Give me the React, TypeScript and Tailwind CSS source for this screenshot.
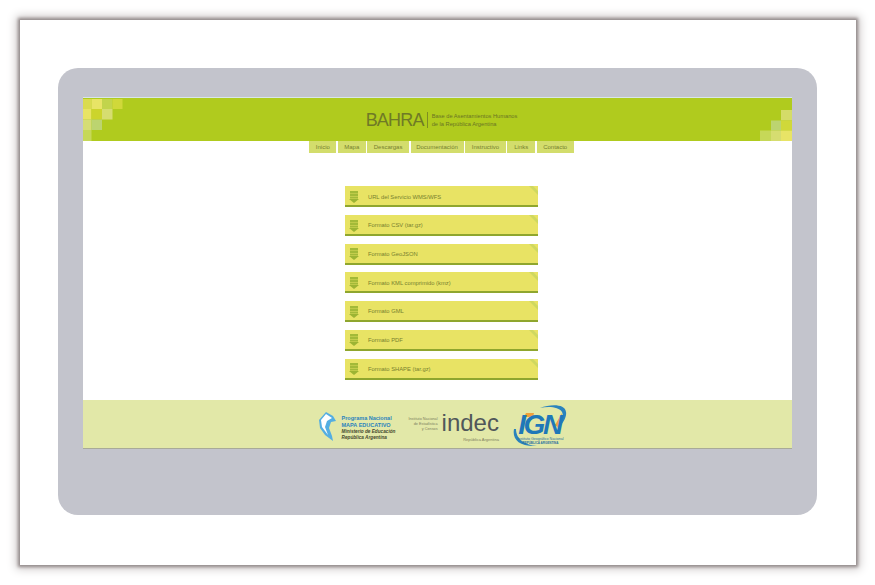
const navItems = [
  { label: "Inicio", width: "w-[27px]" },
  { label: "Mapa", width: "w-[28px]" },
  { label: "Descargas", width: "w-[42px]" },
  { label: "Documentación", width: "w-[53px]" },
  { label: "Instructivo", width: "w-[41px]" },
  { label: "Links", width: "w-[28px]" },
  { label: "Contacto", width: "w-[37px]" },
];

const downloads = [
  "URL del Servicio WMS/WFS",
  "Formato CSV (tar.gz)",
  "Formato GeoJSON",
  "Formato KML comprimido (kmz)",
  "Formato GML",
  "Formato PDF",
  "Formato SHAPE (tar.gz)",
];

function CornerLeft() {
  return (
    <svg className="absolute left-0 top-0" width="40" height="44" viewBox="0 0 40 44">
      <rect x="0" y="1" width="8.5" height="10" fill="#dadb50" />
      <rect x="8.5" y="1" width="10.5" height="10" fill="#e8e466" />
      <rect x="19" y="1" width="10.5" height="10" fill="#c2d44c" />
      <rect x="29.5" y="1" width="10" height="10" fill="#d0d83a" />
      <rect x="0" y="11" width="8.5" height="10.5" fill="#e8e464" />
      <rect x="8.5" y="11" width="10.5" height="10.5" fill="#ccd42c" />
      <rect x="19" y="11" width="10.5" height="10.5" fill="#d6dd70" />
      <rect x="0" y="21.5" width="8.5" height="10.5" fill="#d6dd74" />
      <rect x="8.5" y="21.5" width="10.5" height="10.5" fill="#bcd470" />
      <rect x="0" y="32" width="8.5" height="11" fill="#c6d858" />
    </svg>
  );
}

function CornerRight() {
  return (
    <svg className="absolute bottom-0 right-0" width="32" height="31" viewBox="0 0 32 31">
      <rect x="21" y="0" width="11" height="10.5" fill="#d4dc68" />
      <rect x="11" y="10.5" width="10" height="10" fill="#bcd470" />
      <rect x="21" y="10.5" width="11" height="10" fill="#d0d83a" />
      <rect x="0" y="20.5" width="11" height="10.5" fill="#c6d858" />
      <rect x="11" y="20.5" width="10" height="10.5" fill="#d6dd70" />
      <rect x="21" y="20.5" width="11" height="10.5" fill="#e8e466" />
    </svg>
  );
}

function DownloadIcon() {
  return (
    <svg width="10" height="12" viewBox="0 0 10 12" className="shrink-0">
      <rect x="1" y="0" width="8" height="2.6" fill="#a3ba38" />
      <rect x="1" y="3" width="8" height="2.2" fill="#a3ba38" />
      <rect x="1" y="5.6" width="8" height="2" fill="#a3ba38" />
      <path d="M0 8 H10 L5 12 Z" fill="#9cb433" />
    </svg>
  );
}

function MapaLogo() {
  return (
    <div className="mt-[5px] flex items-center gap-[6px]">
      <svg width="17" height="29" viewBox="0 0 17 29">
        <path d="M7 0 L14 4 L17 9 L12 10 L10 16 L13 24 L14 29 L6 23 L1 16 L0 8 Z" fill="#54aee2" />
        <path d="M7 2 L13 6 L8 9 L6 15 L9 23 L3 15 L2 8 Z" fill="#ffffff" />
      </svg>
      <div className="flex flex-col font-bold text-[#2a83bd]">
        <span className="text-[5.5px] leading-[8px]">Programa Nacional</span>
        <span className="text-[5.5px] leading-[7px]">MAPA EDUCATIVO</span>
        <span className="text-[4.7px] italic leading-[6px] text-[#45482c]">Ministerio de Educación</span>
        <span className="text-[4.7px] italic leading-[5px] text-[#45482c]">República Argentina</span>
      </div>
    </div>
  );
}

function IndecLogo() {
  return (
    <div className="flex items-start gap-[4px] pt-[6px]">
      <div className="mt-[4px] flex flex-col items-end text-[3.8px] leading-[5px] text-[#80805f]">
        <span>Instituto Nacional</span>
        <span>de Estadística</span>
        <span>y Censos</span>
      </div>
      <div className="flex flex-col items-end">
        <span className="text-[24px] leading-[20px] text-[#50575a]">indec</span>
        <span className="mt-[5px] text-[4px] leading-[4px] text-[#80805f]">República Argentina</span>
      </div>
    </div>
  );
}

function IgnLogo() {
  return (
    <div className="relative ml-[1.5px] mt-[3px] flex h-[42px] w-[54px] flex-col items-center">
      <svg className="absolute inset-0" width="54" height="42" viewBox="0 0 54 42">
        <path d="M1 24 C-1 34 6 42 24 41 C13 40 3 35 3 24 Z" fill="#2a83bd" />
        <path d="M27 3 C38 -1 52 -1 53 7 C54 12 50 18 46 23 C49 17 51 11 49 7 C46 2 36 1 27 3 Z" fill="#2a83bd" />
        <path d="M13 8 H21 L20 12 H11 Z" fill="#f0a13a" />
        <path d="M42 20 L49 8 L47 24 Z" fill="#f0a13a" />
      </svg>
      <div className="relative mt-[7px] pr-[2px] text-[28px] font-bold italic leading-[25px] tracking-[-2.4px] text-[#1f78b8]">
        IGN
      </div>
      <span className="relative whitespace-nowrap text-[3.6px] leading-[4px] text-[#2a6f9f]">Instituto Geográfico Nacional</span>
      <span className="relative whitespace-nowrap text-[3px] font-bold leading-[4px] text-[#2a6f9f]">REPÚBLICA ARGENTINA</span>
    </div>
  );
}

export default function App() {
  return (
    <div className="h-[585px] w-[875px] overflow-hidden bg-white pl-5 pt-5 font-['Liberation_Sans',Arial,sans-serif]">
      <div className="h-[545px] w-[836px] bg-white pl-[38px] pt-[48px] shadow-[0_0_3px_2px_#938a8a,0_0_9px_4px_#cfcbcb]">
        {/* gray panel */}
        <div className="h-[447px] w-[759px] rounded-[20px] bg-[#c3c4cc] pl-[25px] pt-[29px]">
          <div className="flex h-[352px] w-[709px] flex-col bg-white">
            {/* HEADER */}
            <header className="relative flex h-[44px] shrink-0 items-center justify-center border-t border-[#d8e6e8] bg-[#b0cb1e] pl-[8px]">
              <CornerLeft />
              <CornerRight />
              <div className="flex items-center">
                <span className="text-[18px] leading-none tracking-[-0.8px] text-[#6f7a26]">BAHRA</span>
                <span className="ml-[3px] mr-[4px] h-[16px] w-px bg-[#7e8d22]" />
                <div className="flex flex-col text-[5.7px] leading-[8px] text-[#6a7524]">
                  <span>Base de Asentamientos Humanos</span>
                  <span>de la República Argentina</span>
                </div>
              </div>
            </header>

            {/* NAV */}
            <nav className="flex h-[12px] shrink-0 justify-center gap-[1.4px] pl-[8px]">
              {navItems.map((item) => (
                <a
                  key={item.label}
                  className={`flex h-[12px] items-center justify-center bg-[#d3dd6c] text-[6px] text-[#77812f] ${item.width}`}
                >
                  {item.label}
                </a>
              ))}
            </nav>

            {/* DOWNLOADS */}
            <main className="flex flex-1 flex-col items-center gap-[7.7px] pl-[8px] pt-[33.4px]">
              {downloads.map((label) => (
                <a
                  key={label}
                  className="relative flex h-[21px] w-[193px] items-center gap-[9px] border-b-2 border-[#8fa62e] bg-[#e8e364] pl-[4px] pt-[2px] text-[5.8px] text-[#77812f]"
                >
                  <DownloadIcon />
                  <span>{label}</span>
                  <svg className="absolute right-0 top-0" width="9" height="9" viewBox="0 0 9 9">
                    <path d="M0 0 H4 L9 5 V9 Z" fill="#cfd860" />
                  </svg>
                </a>
              ))}
            </main>

            {/* FOOTER */}
            <footer className="flex h-[49px] shrink-0 items-center justify-center gap-[13px] border-b border-[#a8aa98] bg-[#e2e8a8] pl-[11px]">
              <MapaLogo />
              <IndecLogo />
              <IgnLogo />
            </footer>
          </div>
        </div>
      </div>
    </div>
  );
}
